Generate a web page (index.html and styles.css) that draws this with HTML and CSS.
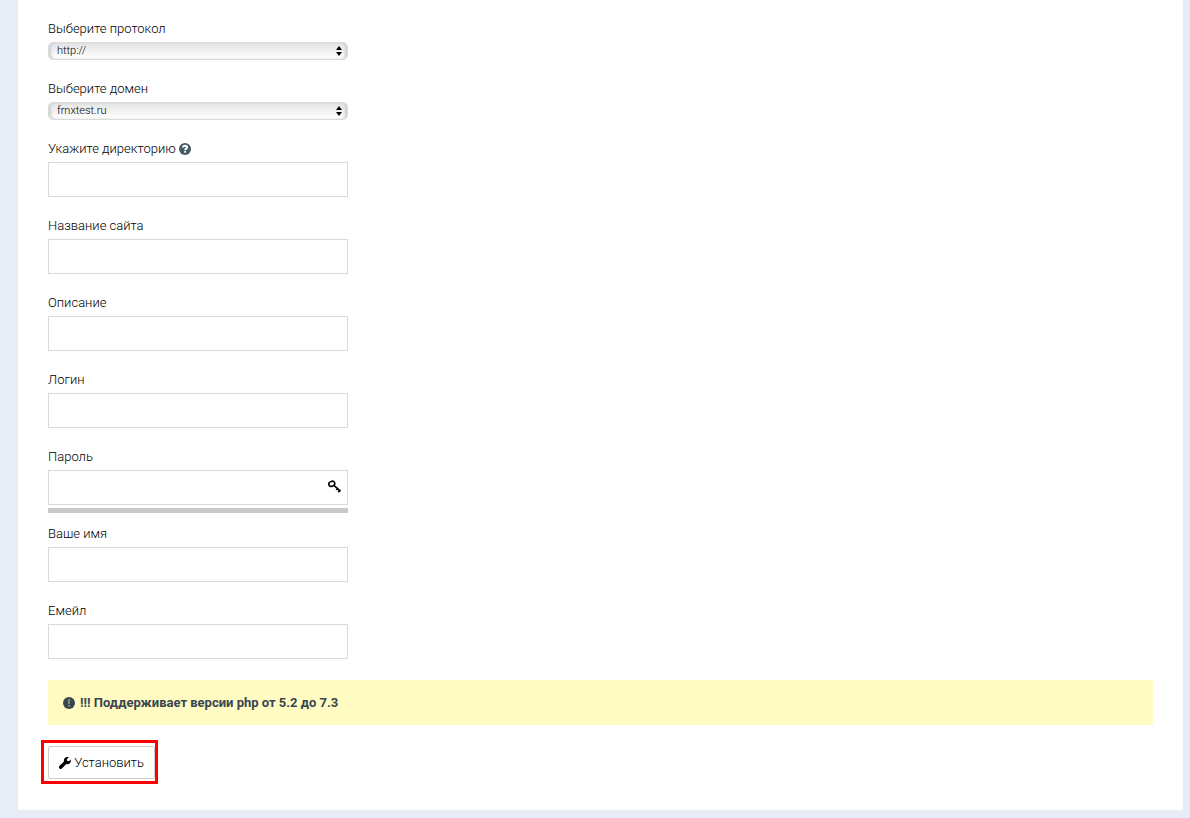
FILE: index.html
```html
<!DOCTYPE html>
<html lang="ru">
<head>
    <meta charset="utf-8">
    <title>Установка</title>
    <link rel="stylesheet" href="styles.css">
</head>
<body>
    <div class="panel">
        <form id="installForm">
            <div class="field">
                <label for="protocol">Выберите протокол</label>
                <div class="select-wrap">
                    <select id="protocol" name="protocol">
                        <option>http://</option>
                    </select>
                    <svg class="arrows" viewBox="0 0 6 10"><path d="M3 0L6 4H0zM3 10L0 6h6z"/></svg>
                </div>
            </div>
            <div class="field">
                <label for="domain">Выберите домен</label>
                <div class="select-wrap">
                    <select id="domain" name="domain">
                        <option>frnxtest.ru</option>
                    </select>
                    <svg class="arrows" viewBox="0 0 6 10"><path d="M3 0L6 4H0zM3 10L0 6h6z"/></svg>
                </div>
            </div>
            <div class="field">
                <label for="directory">Укажите директорию
                    <svg class="icon help" viewBox="0 0 12 12"><circle cx="6" cy="6" r="6"/><path class="mark" d="M4 4.6C4 3.3 4.8 2.7 6 2.7s2.1.7 2.1 1.7C8.1 5.700 6.200 5.600 6.200 7.200"/><path class="dot" d="M5.300 8.100h1.700v1.600H5.300z"/></svg>
                </label>
                <input type="text" id="directory" name="directory">
            </div>
            <div class="field">
                <label for="siteName">Название сайта</label>
                <input type="text" id="siteName" name="siteName">
            </div>
            <div class="field">
                <label for="description">Описание</label>
                <input type="text" id="description" name="description">
            </div>
            <div class="field">
                <label for="login">Логин</label>
                <input type="text" id="login" name="login">
            </div>
            <div class="field field-password">
                <label for="password">Пароль</label>
                <input type="password" id="password" name="password">
                <button type="button" class="generate" aria-label="Сгенерировать пароль">
                    <svg class="key" viewBox="0 0 12 12"><ellipse cx="3.500" cy="3.500" rx="2.800" ry="2.200" transform="rotate(-25 3.500 3.500)"/><path d="M5.500 5l6 5.500M7.700 9.300l1.700-2M9.500 11.300l2-2.300"/></svg>
                </button>
                <div class="strength"></div>
            </div>
            <div class="field">
                <label for="userName">Ваше имя</label>
                <input type="text" id="userName" name="userName">
            </div>
            <div class="field">
                <label for="email">Емейл</label>
                <input type="email" id="email" name="email">
            </div>

            <div class="notice">
                <svg class="icon" viewBox="0 0 12 12"><circle cx="6" cy="6" r="6"/><path class="bang" d="M5.200 2.300h1.600L6.600 7H5.400zM5.200 8h1.600v1.600H5.200z"/></svg>
                <span>!!! Поддерживает версии php от 5.2 до 7.3</span>
            </div>

            <div class="highlight">
                <button type="submit" class="install">
                    <svg class="wrench" viewBox="0 0 12 12"><path d="M11.700 2.700L9.900 4.300 8.100 3.800 7.800 2.300 9.700.4C8.300-.2 6.700.1 5.700 1.200 4.900 2.100 4.700 3.300 5 4.400L.6 8.800c-.8.800-.8 1.900-.1 2.600s1.900.7 2.600-.1L7.400 7c1.200.4 2.600.1 3.500-.8 1-1 1.300-2.300.8-3.500z"/></svg>
                    Установить
                </button>
            </div>
        </form>
    </div>
</body>
</html>
```

FILE: styles.css
```css
* {
    box-sizing: border-box;
}

body {
    margin: 0;
    padding: 0 7px 8px 18px;
    background-color: #e8ecf6;
    color: #000;
    font-family: Roboto, sans-serif;
    font-size: 13px;
    font-weight: 300;
    line-height: 20px;
}

.panel {
    padding: 18px 30px 26px;
    background-color: #fff;
}

.field {
    position: relative;
    width: 300px;
    margin-bottom: 18px;
}

label {
    display: block;
    margin-bottom: 2px;
    line-height: 22px;
}

input {
    display: block;
    width: 100%;
    height: 35px;
    padding: 0 10px;
    border: 1px solid #dadada;
    background-color: #fff;
    font: inherit;
}

.select-wrap {
    position: relative;
}

select {
    display: block;
    width: 100%;
    height: 18px;
    padding: 0 20px 0 8px;
    appearance: none;
    border: 1px solid #dadada;
    border-radius: 5px;
    background: linear-gradient(#e4e4e4, #fff);
    box-shadow: inset 3px 0 3px -1px #d0d0d0, inset -3px 0 3px -1px #d0d0d0;
    color: #000;
    font-family: inherit;
    font-size: 11px;
    font-weight: 300;
    line-height: 14px;
}

.arrows {
    position: absolute;
    top: 4px;
    right: 6px;
    width: 6px;
    height: 10px;
    pointer-events: none;
}

.icon {
    width: 12px;
    height: 12px;
    vertical-align: -2px;
    fill: #37474f;
}

.help {
    fill: #455a64;
}

.mark {
    fill: none;
    stroke: #fff;
    stroke-width: 2;
}

.dot {
    fill: #fff;
}

.bang {
    fill: #a5aa93;
}

.field-password {
    margin-bottom: 10px;
}

.generate {
    position: absolute;
    top: 34px;
    right: 7px;
    width: 13px;
    height: 13px;
    padding: 0;
    border: none;
    background: none;
    cursor: pointer;
}

.key {
    display: block;
    width: 13px;
    height: 13px;
    fill: none;
    stroke: #000;
    stroke-width: 1.5;
}

.strength {
    height: 5px;
    margin-top: 3px;
    background-color: #c9c9c9;
}

.notice {
    display: flex;
    align-items: center;
    gap: 5px;
    margin-top: 21px;
    padding: 13px 15px 12px;
    background-color: #fffbc2;
    color: #37474f;
    font-weight: bold;
}

.highlight {
    width: fit-content;
    margin: 15px 0 0 -7px;
    padding: 3px 0 2px 4px;
    border: 3px solid #f00;
}

.install {
    display: block;
    height: 33px;
    padding: 0 10px;
    border: 1px solid #ccc;
    border-radius: 2px;
    background-color: #fff;
    color: #000;
    font: inherit;
    cursor: pointer;
}

.install:hover {
    background-color: #f5f5f5;
}

.wrench {
    width: 12px;
    height: 12px;
    vertical-align: -2px;
}
```
